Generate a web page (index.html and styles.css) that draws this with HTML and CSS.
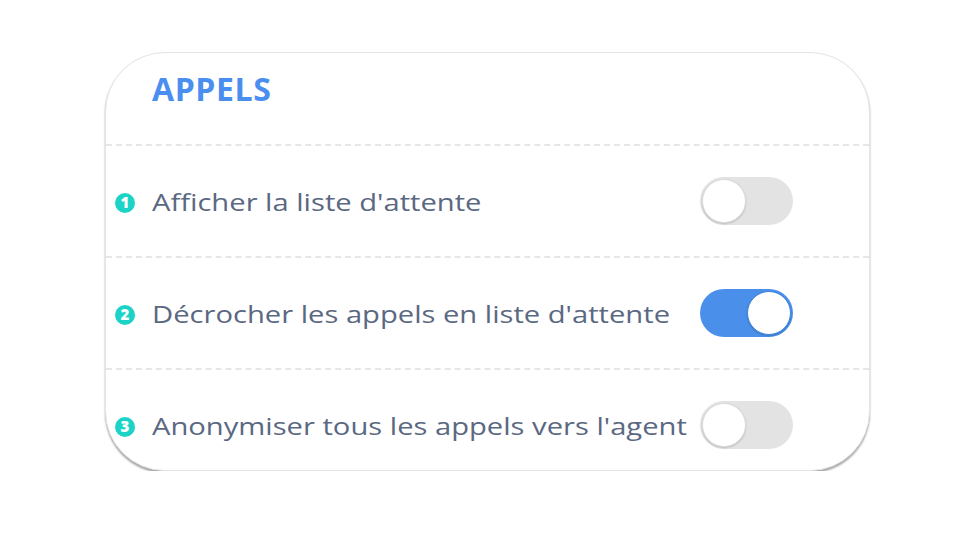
FILE: index.html
```html
<!DOCTYPE html>
<html>
<head>
  <meta charset="UTF-8">
  <title>Appels</title>
  <link rel="stylesheet" href="styles.css">
</head>
<body>
  <div class="card">
    <div class="card-head">
      <h1>APPELS</h1>
    </div>
    <div class="row">
      <span class="num">1</span>
      <span class="label"><span class="txt">Afficher la liste d'attente</span></span>
      <span class="toggle"><span class="knob"></span></span>
    </div>
    <div class="row">
      <span class="num">2</span>
      <span class="label"><span class="txt">Décrocher les appels en liste d'attente</span></span>
      <span class="toggle on"><span class="knob"></span></span>
    </div>
    <div class="row last">
      <span class="num">3</span>
      <span class="label"><span class="txt">Anonymiser tous les appels vers l'agent</span></span>
      <span class="toggle"><span class="knob"></span></span>
    </div>
  </div>
</body>
</html>
```

FILE: styles.css
```css
body{
  margin:0;
  background:#fff;
  font-family:"Open Sans", "Noto Sans", sans-serif;
}
.card{
  margin:52px 0 0 105px;
  width:765px;
  height:419px;
  box-sizing:border-box;
  border:1px solid #e4e4e4;
  border-radius:60px;
  box-shadow:0 2px 2px rgba(0,0,0,0.35);
  overflow:hidden;
  background:#fff;
}
.card-head{
  height:93px;
  display:flex;
  align-items:center;
  padding-left:46px;
  padding-bottom:20px;
  box-sizing:border-box;
  border-bottom:2px dashed #e6e6e6;
}
.card-head h1{
  margin:0;
  font-size:32px;
  font-weight:700;
  color:#4a8ef0;
  letter-spacing:0.6px;
}
.row{
  height:110px;
  display:flex;
  align-items:center;
  border-bottom:2px dashed #e6e6e6;
  padding-left:9px;
}
.row.last{
  border-bottom:none;
  height:101px;
  padding-top:9px;
  box-sizing:border-box;
}
.num{
  width:20px;
  height:20px;
  border-radius:50%;
  background:#1bd3c6;
  color:#fff;
  font-size:15px;
  font-weight:800;
  display:flex;
  align-items:center;
  justify-content:center;
  line-height:1;
  margin-right:17px;
  margin-top:3px;
}
.label{
  width:548px;
}
.txt{
  display:inline-block;
  font-size:24px;
  color:#5b6882;
  transform:scaleX(1.215);
  transform-origin:left center;
  white-space:nowrap;
}
.toggle{
  width:93px;
  height:48px;
  border-radius:24px;
  background:#e3e3e3;
  display:flex;
  align-items:center;
  padding:2px;
  box-sizing:border-box;
}
.knob{
  width:44px;
  height:44px;
  border-radius:50%;
  background:#fff;
  box-sizing:border-box;
  border:1px solid #dcdcdc;
  box-shadow:0 1px 2px rgba(0,0,0,0.18);
}
.toggle.on{
  background:#4a90ea;
  justify-content:flex-end;
}
.toggle.on .knob{
  border-color:#3d83de;
}
```
